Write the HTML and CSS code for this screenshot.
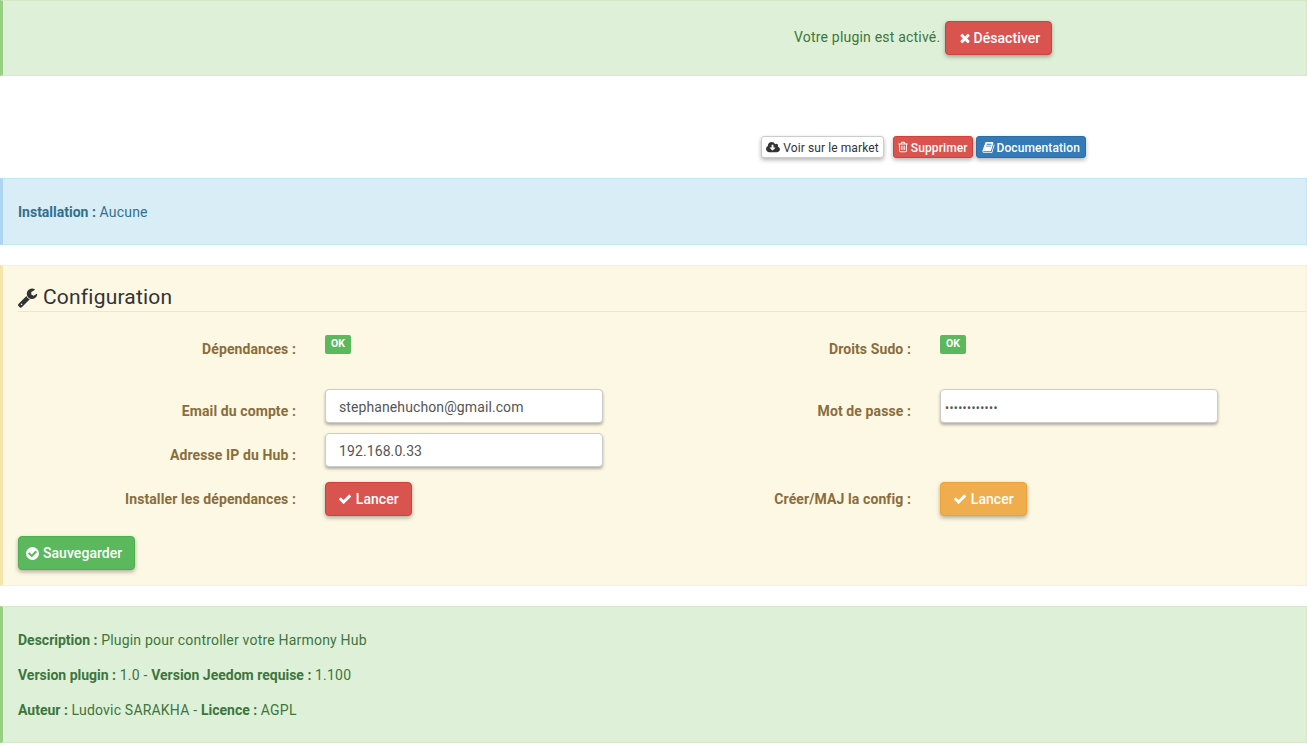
FILE: index.html
```html
<!DOCTYPE html>
<html lang="fr">
<head>
<meta charset="utf-8">
<title>Plugin</title>
<link rel="stylesheet" href="styles.css">
</head>
<body>
<svg class="defs" width="0" height="0" aria-hidden="true">
  <symbol id="i-times" viewBox="0 0 1792 1792"><path d="M1490 1322q0 40-28 68l-136 136q-28 28-68 28t-68-28l-294-294-294 294q-28 28-68 28t-68-28l-136-136q-28-28-28-68t28-68l294-294-294-294q-28-28-28-68t28-68l136-136q28-28 68-28t68 28l294 294 294-294q28-28 68-28t68 28l136 136q28 28 28 68t-28 68l-294 294 294 294q28 28 28 68z"/></symbol>
  <symbol id="i-check" viewBox="0 0 1792 1792"><path d="M1671 566q0 40-28 68l-724 724-136 136q-28 28-68 28t-68-28l-136-136-362-362q-28-28-28-68t28-68l136-136q28-28 68-28t68 28l294 295 656-657q28-28 68-28t68 28l136 136q28 28 28 68z"/></symbol>
  <symbol id="i-check-circle" viewBox="0 0 1792 1792"><path d="M1412 734q0-28-18-46l-91-90q-19-19-45-19t-45 19l-408 407-226-226q-19-19-45-19t-45 19l-91 90q-18 18-18 46 0 27 18 45l362 362q19 19 45 19 27 0 46-19l543-543q18-18 18-45zm252 162q0 209-103 385.5t-279.5 279.5-385.5 103-385.5-103-279.5-279.5-103-385.5 103-385.5 279.5-279.5 385.5-103 385.5 103 279.5 279.5 103 385.5z"/></symbol>
  <symbol id="i-wrench" viewBox="0 0 1792 1792"><path d="M448 1472q0-26-19-45t-45-19-45 19-19 45 19 45 45 19 45-19 19-45zm644-420l-682 682q-37 37-90 37-52 0-91-37l-106-108q-38-36-38-90 0-53 38-91l681-681q39 98 114.5 173.5t173.5 114.5zm634-435q0 39-23 106-47 134-164.5 217.5t-258.5 83.5q-185 0-316.5-131.5t-131.5-316.5 131.5-316.5 316.5-131.5q58 0 121.5 16.5t107.5 46.5q16 11 16 28t-16 28l-293 169v224l193 107q5-3 79-48.5t135.5-81 70.5-35.5q15 0 23.5 10t8.5 25z"/></symbol>
  <symbol id="i-cloud" viewBox="0 0 1920 1792"><path d="M1280 928q0-14-9-23t-23-9h-224v-352q0-13-9.5-22.5t-22.5-9.5h-192q-13 0-22.5 9.5t-9.5 22.5v352h-224q-13 0-22.5 9.5t-9.5 22.5q0 14 9 23l352 352q9 9 23 9t23-9l351-351q10-12 10-24zm640 224q0 159-112.5 271.5t-271.5 112.5h-1088q-185 0-316.5-131.5t-131.5-316.5q0-130 70-240t188-165q-2-30-2-43 0-212 150-362t362-150q156 0 285.5 87t188.5 231q71-62 166-62 106 0 181 75t75 181q0 76-41 138 130 31 213.5 135.5t83.5 238.5z"/></symbol>
  <symbol id="i-trash" viewBox="0 0 1792 1792"><path d="M704 736v576q0 14-9 23t-23 9h-64q-14 0-23-9t-9-23v-576q0-14 9-23t23-9h64q14 0 23 9t9 23zm256 0v576q0 14-9 23t-23 9h-64q-14 0-23-9t-9-23v-576q0-14 9-23t23-9h64q14 0 23 9t9 23zm256 0v576q0 14-9 23t-23 9h-64q-14 0-23-9t-9-23v-576q0-14 9-23t23-9h64q14 0 23 9t9 23zm128 724v-948h-896v948q0 22 7 40.5t14.5 27 10.5 8.5h832q3 0 10.5-8.5t14.5-27 7-40.5zm-672-1076h448l-48-117q-7-9-17-11h-317q-10 2-17 11zm928 32v64q0 14-9 23t-23 9h-96v948q0 83-47 143.5t-113 60.5h-832q-66 0-113-58.5t-47-141.5v-952h-96q-14 0-23-9t-9-23v-64q0-14 9-23t23-9h309l70-167q15-37 54-63t79-26h320q40 0 79 26t54 63l70 167h309q14 0 23 9t9 23z"/></symbol>
  <symbol id="i-book" viewBox="0 0 1792 1792"><path d="M1703 478q40 57 18 129l-275 906q-19 64-76.5 107.5t-122.5 43.5h-923q-77 0-148.5-53.5t-99.5-131.5q-24-67-2-127 0-4 3-27t4-37q1-8-3-21.5t-3-19.5q2-11 8-21t16.5-23.5 16.5-23.5q23-38 45-91.5t30-91.5q3-10 .5-30t-.5-28q3-11 17-28t17-23q21-36 42-92t25-90q1-9-2.5-32t.5-28q4-13 22-30.5t22-22.5q19-26 42.5-84.5t27.5-96.5q1-8-3-25.5t-2-26.5q2-8 9-18t18-23 17-21q8-12 16.5-30.5t15-35 16-36 19.5-32 26.5-23.5 36-11.5 47.5 5.5l-1 3q38-9 51-9h761q74 0 114 56t18 130l-274 906q-36 119-71.5 153.5t-128.5 34.5h-869q-27 0-38 15-11 16-1 43 24 70 144 70h923q29 0 56-15.5t35-41.5l300-987q7-22 5-57 38 15 59 43zm-1064 2q-4 13 2 22.5t20 9.5h608q13 0 25.5-9.5t16.5-22.5l21-64q4-13-2-22.5t-20-9.5h-608q-13 0-25.5 9.5t-16.5 22.5zm-83 256q-4 13 2 22.5t20 9.5h608q13 0 25.5-9.5t16.5-22.5l21-64q4-13-2-22.5t-20-9.5h-608q-13 0-25.5 9.5t-16.5 22.5z"/></symbol>
</svg>

<section class="panel success status">
  <span class="status-text">Votre plugin est activé.</span>
  <button class="btn btn-md red"><svg class="ico ico-times"><use href="#i-times"/></svg>Désactiver</button>
</section>

<div class="actions">
  <button class="btn btn-xs white"><svg class="ico ico-cloud"><use href="#i-cloud"/></svg>Voir sur le market</button>
  <button class="btn btn-xs red sup"><svg class="ico ico-trash"><use href="#i-trash"/></svg>Supprimer</button>
  <button class="btn btn-xs blue"><svg class="ico ico-book"><use href="#i-book"/></svg>Documentation</button>
</div>

<section class="panel info install">
  <p><b>Installation :</b> Aucune</p>
</section>

<section class="panel warning config">
  <h3 class="legend"><svg class="ico-title"><use href="#i-wrench"/></svg>Configuration</h3>
  <div class="form-row row-status">
    <label>Dépendances :</label>
    <div class="val"><span class="badge">OK</span></div>
    <label>Droits Sudo :</label>
    <div class="val"><span class="badge">OK</span></div>
  </div>
  <div class="form-row row-input">
    <label>Email du compte :</label>
    <div class="val"><input class="field" type="text" value="stephanehuchon@gmail.com"></div>
    <label>Mot de passe :</label>
    <div class="val"><input class="field pw" type="password" value="xxxxxxxxxxxx"></div>
  </div>
  <div class="form-row row-input row-last">
    <label>Adresse IP du Hub :</label>
    <div class="val"><input class="field" type="text" value="192.168.0.33"></div>
  </div>
  <div class="form-row row-run">
    <label>Installer les dépendances :</label>
    <div class="val"><button class="btn btn-md red"><svg class="ico ico-check"><use href="#i-check"/></svg>Lancer</button></div>
    <label>Créer/MAJ la config :</label>
    <div class="val"><button class="btn btn-md orange"><svg class="ico ico-check"><use href="#i-check"/></svg>Lancer</button></div>
  </div>
  <button class="btn btn-md green save"><svg class="ico ico-cc"><use href="#i-check-circle"/></svg>Sauvegarder</button>
</section>

<section class="panel success about">
  <p><b>Description :</b> Plugin pour controller votre Harmony Hub</p>
  <p><b>Version plugin :</b> 1.0 - <b>Version Jeedom requise :</b> 1.100</p>
  <p><b>Auteur :</b> Ludovic SARAKHA - <b>Licence :</b> AGPL</p>
</section>
</body>
</html>
```

FILE: styles.css
```css
* { box-sizing: border-box; }
html, body { margin: 0; padding: 0; }
body {
  font-family: Roboto, "Liberation Sans", sans-serif;
  font-size: 14px;
  line-height: 20px;
  letter-spacing: .2px;
  color: #333;
  background: #fff;
  overflow: hidden;
}
.defs { display: block; height: 0; }
p { margin: 0; }
b { font-weight: 700; letter-spacing: 0; }

.panel {
  border: 1px solid;
  border-left-width: 3px;
  padding-left: 15px;
}
.success { background: #dff0d8; border-color: #d6e9c6; border-left-color: #97cf83; color: #3c763d; }
.info { background: #d9edf7; border-color: #bce8f1; border-left-color: #add4f1; color: #31708f; }
.warning { background: #fcf8e3; border-color: #f8eedb; border-left-color: #f5e5a8; color: #8a6d3b; }

.btn {
  display: inline-flex;
  align-items: center;
  justify-content: center;
  font-family: inherit;
  font-weight: 500;
  letter-spacing: .05px;
  border: 1px solid;
  padding: 0;
  cursor: pointer;
  box-shadow: 0 2px 4px rgba(0, 0, 0, .3);
}
.btn-md { height: 34px; font-size: 14px; border-radius: 4px; }
.btn-xs { height: 22px; font-size: 12px; border-radius: 3px; padding-top: 1px; letter-spacing: .1px; }
.red { background: #d9534f; border-color: #d43f3a; color: #fff; }
.blue { background: #337ab7; border-color: #2e6da4; color: #fff; }
.white { background: #fff; border-color: #ccc; color: #333; font-weight: 400; }
.orange { background: #f0ad4e; border-color: #eea236; color: #fff; }
.green { background: #5cb85c; border-color: #4cae4c; color: #fff; }

.ico { fill: currentColor; flex: none; }
.ico-times { width: 14px; height: 14px; margin-right: 2px; }
.ico-check { width: 14px; height: 14px; margin-right: 3.5px; }
.ico-cc { width: 15px; height: 15px; margin-right: 3px; }
.ico-cloud { width: 14px; height: 13px; margin-right: 3px; }
.ico-trash { width: 12px; height: 12px; margin-right: 1.5px; margin-left: -1px; margin-top: -1px; }
.ico-book { width: 13px; height: 13px; margin-right: 1.5px; margin-top: -1px; }

.status {
  height: 76px;
  display: flex;
  align-items: center;
  padding-left: 791px;
}
.status-text { margin-right: 5px; margin-top: -3px; }
.status .btn { width: 107px; margin-top: -1px; }

.actions {
  display: flex;
  padding: 60px 0 0 761px;
  height: 102px;
}
.actions .white { width: 123px; }
.actions .sup { width: 80px; margin-left: 9px; }
.actions .blue { width: 110px; margin-left: 3px; }

.install { height: 67px; display: flex; align-items: center; }

.config { height: 321px; margin-top: 20px; padding-top: 15px; }
.legend {
  margin: 0;
  height: 31px;
  padding-top: 2px;
  font-size: 21px;
  font-weight: 400;
  line-height: 30px;
  letter-spacing: .2px;
  color: #333;
  border-bottom: 1px solid #e5e5e5;
  display: flex;
  align-items: center;
}
.ico-title { width: 21px; height: 21px; fill: #333; margin-left: -1px; margin-right: 5px; flex: none; }

.form-row {
  display: grid;
  grid-template-columns: 307px 308px 307px 278px;
}
.form-row label {
  font-weight: 700;
  letter-spacing: .1px;
  text-align: right;
  padding-right: 29px;
  line-height: 20px;
  padding-top: 12px;
}
.row-status { height: 77px; padding-top: 16px; }
.row-status label { padding-top: 11px; }
.row-input { height: 44px; }
.row-last { height: 49px; }
.row-run { height: 54px; }
.row-run label { padding-top: 7px; }

.badge {
  display: block;
  width: 26px;
  height: 19px;
  margin-top: 7px;
  background: #5cb85c;
  color: #fff;
  border-radius: 2px;
  font-size: 10.5px;
  font-weight: 700;
  line-height: 17px;
  letter-spacing: 0;
  text-align: center;
}

.field {
  display: block;
  width: 278px;
  height: 34px;
  padding: 1px 13px 0;
  font-family: inherit;
  font-size: 14px;
  letter-spacing: .1px;
  color: #555;
  background: #fff;
  border: 1px solid #ccc;
  border-radius: 4px;
  box-shadow: 0 2px 3px rgba(0, 0, 0, .3);
  outline: none;
}
.pw { padding: 3px 4px 0; font-size: 12px; letter-spacing: .35px; }
.row-run .btn { width: 87px; }
.save { width: 117px; justify-content: flex-start; padding-left: 6px; }

.about { height: 137px; margin-top: 20px; padding-top: 23px; }
.about p { margin-bottom: 15px; }
```
